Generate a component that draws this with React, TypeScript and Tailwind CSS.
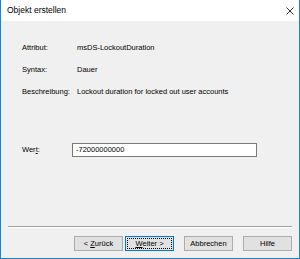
const font = { fontFamily: '"Liberation Sans", Arial, sans-serif' };

const CloseIcon = () => (
  <svg width="8" height="8" viewBox="0 0 8 8" className="text-[#333]">
    <path d="M0.5 0.5 L7.5 7.5 M7.5 0.5 L0.5 7.5" stroke="currentColor" strokeWidth="1" fill="none" />
  </svg>
);

const Button = ({ children, primary = false }: { children: React.ReactNode; primary?: boolean }) => (
  <button
    className={
      primary
        ? 'w-[49px] h-[15px] bg-[#e1e1e1] border border-[#0078d7] p-[1px] text-[7.5px] leading-none text-black'
        : 'w-[49px] h-[15px] bg-[#e1e1e1] border border-[#adadad] text-[7.5px] leading-none text-black'
    }
  >
    {primary ? (
      <span className="flex h-full w-full items-center justify-center border border-dotted border-black">
        {children}
      </span>
    ) : (
      children
    )}
  </button>
);

export default function App() {
  return (
    <div
      className="w-[300px] h-[259px] flex flex-col bg-[#f0f0f0] border-x border-b border-[#1883d7] text-black"
      style={font}
    >
      {/* Title bar */}
      <div className="h-[21px] bg-white flex items-center justify-between pl-[6px] pr-[5px]">
        <span className="text-[8.5px]">Objekt erstellen</span>
        <CloseIcon />
      </div>

      {/* Attribute info */}
      <div className="pt-[16px] pl-[21px] grid grid-cols-[55px_1fr] text-[7.5px]">
        <div className="h-[22px] flex items-center">Attribut:</div>
        <div className="h-[22px] flex items-center">msDS-LockoutDuration</div>
        <div className="h-[22px] flex items-center">Syntax:</div>
        <div className="h-[22px] flex items-center">Dauer</div>
        <div className="h-[22px] flex items-center">Beschreibung:</div>
        <div className="h-[22px] flex items-center">Lockout duration for locked out user accounts</div>
      </div>

      {/* Value */}
      <div className="mt-[40px] pl-[21px] flex items-center text-[7.5px]">
        <span className="w-[50px]">
          Wer<span className="underline">t</span>:
        </span>
        <div className="w-[185px] h-[14px] bg-white border border-[#7a7a7a] flex items-center pl-[3px]">
          -72000000000
        </div>
      </div>

      <div className="flex-1" />

      {/* Separator + buttons */}
      <div className="mx-[7px] h-[2px] border-t border-[#a0a0a0] border-b border-b-white" />
      <div className="mt-[8px] mb-[7px] flex justify-end pr-[7px] gap-[10px]">
        <div className="flex gap-[2px]">
          <Button>
            &lt; <span className="underline">Z</span>urück
          </Button>
          <Button primary>
            <span className="underline">W</span>eiter &gt;
          </Button>
        </div>
        <Button>Abbrechen</Button>
        <Button>Hilfe</Button>
      </div>
    </div>
  );
}
